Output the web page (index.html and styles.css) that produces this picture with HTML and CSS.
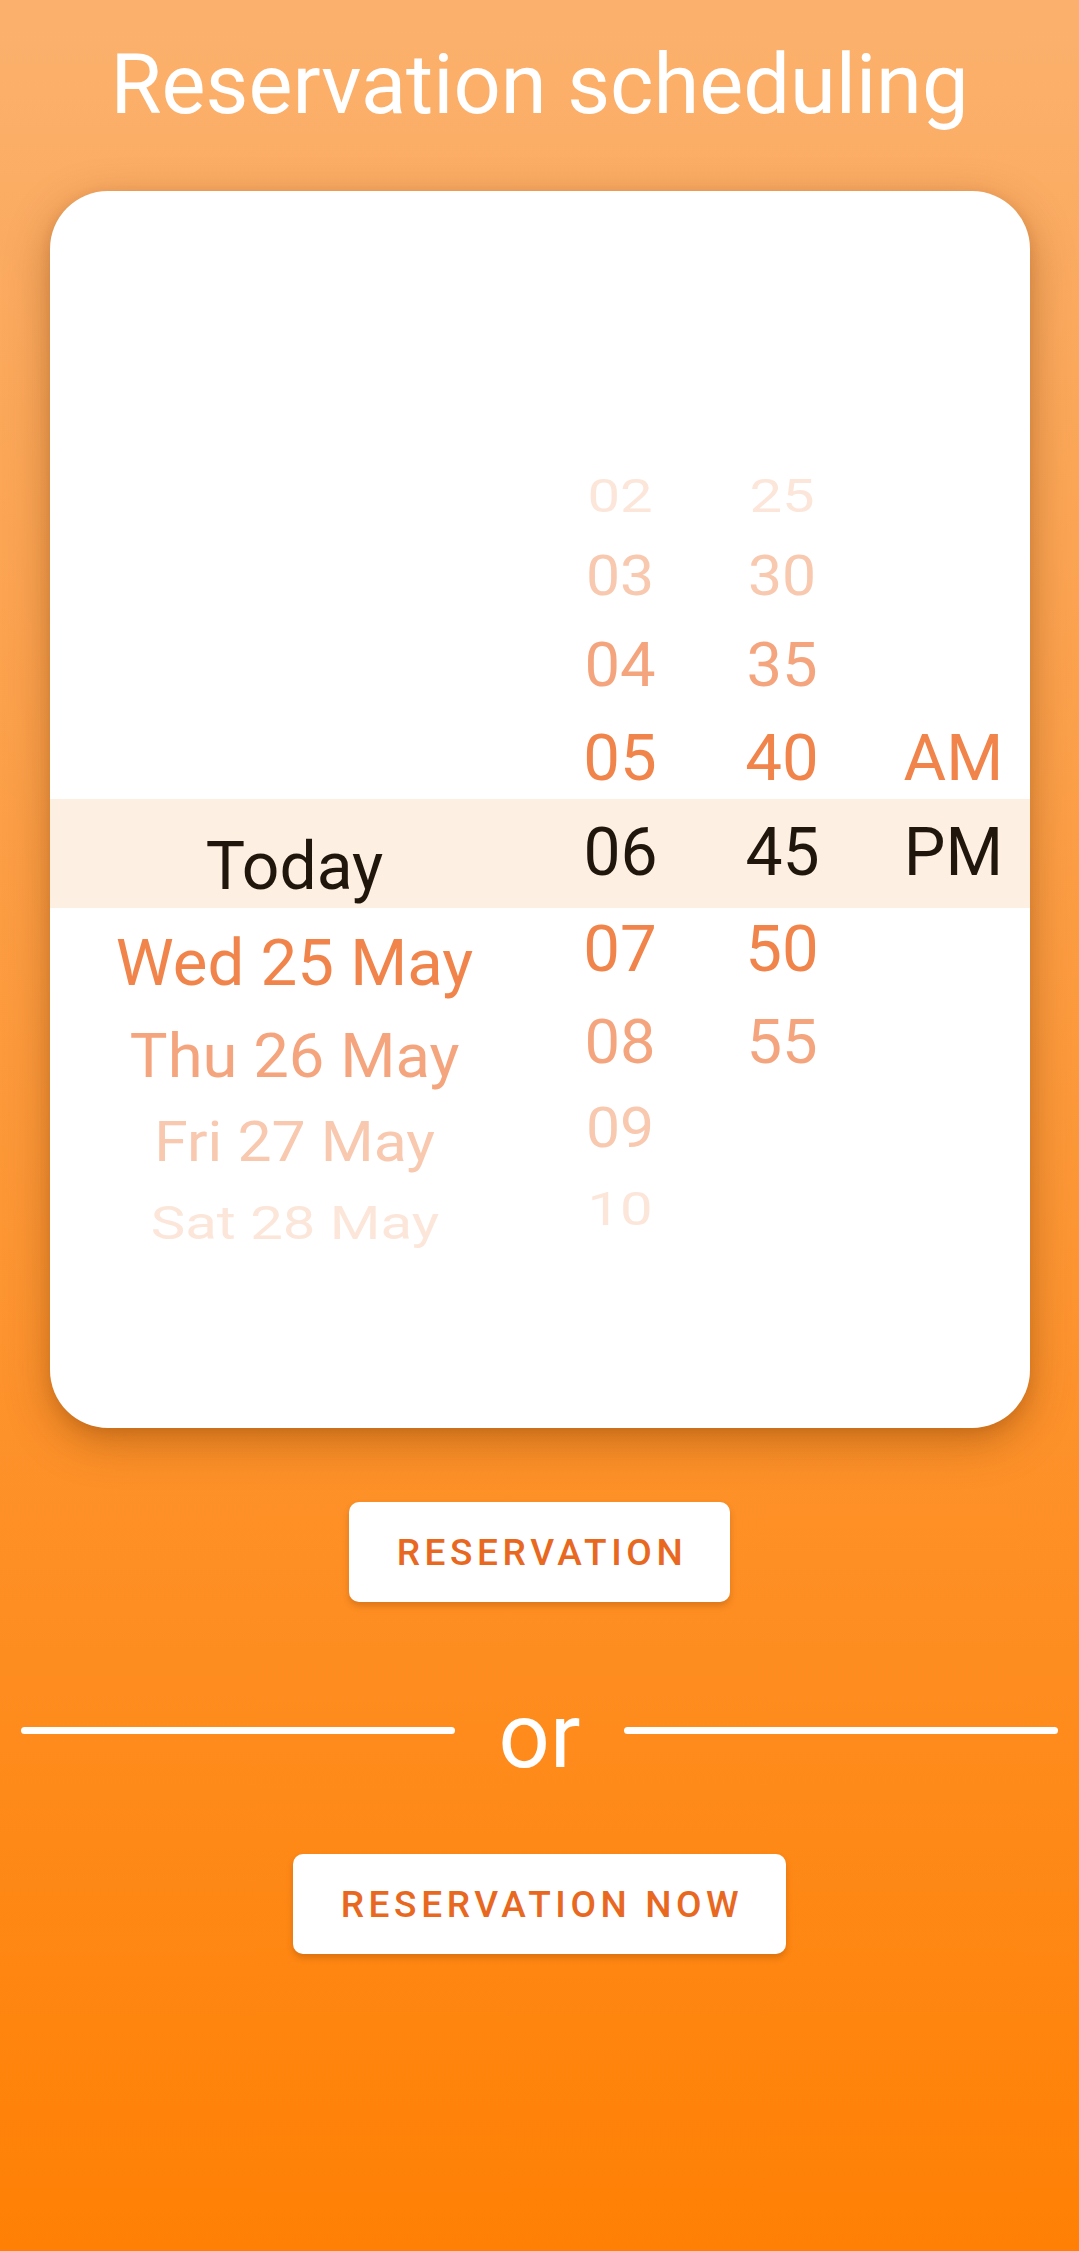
FILE: index.html
```html
<!DOCTYPE html>
<html lang="en">
<head>
<meta charset="utf-8">
<title>Reservation scheduling</title>
<link rel="stylesheet" href="styles.css">
</head>
<body>
<main class="screen">
  <h1 class="title">Reservation scheduling</h1>

  <section class="card">
    <div class="band"></div>
    <div class="picker">
      <div class="wheel wheel-date">
        <div class="row d4"></div>
        <div class="row d3"></div>
        <div class="row d2"></div>
        <div class="row d1"></div>
        <div class="row d0"><span>Today</span></div>
        <div class="row d1"><span>Wed 25 May</span></div>
        <div class="row d2"><span>Thu 26 May</span></div>
        <div class="row d3"><span>Fri 27 May</span></div>
        <div class="row d4"><span>Sat 28 May</span></div>
      </div>
      <div class="wheel wheel-hour">
        <div class="row d4"><span>02</span></div>
        <div class="row d3"><span>03</span></div>
        <div class="row d2"><span>04</span></div>
        <div class="row d1"><span>05</span></div>
        <div class="row d0"><span>06</span></div>
        <div class="row d1"><span>07</span></div>
        <div class="row d2"><span>08</span></div>
        <div class="row d3"><span>09</span></div>
        <div class="row d4"><span>10</span></div>
      </div>
      <div class="wheel wheel-min">
        <div class="row d4"><span>25</span></div>
        <div class="row d3"><span>30</span></div>
        <div class="row d2"><span>35</span></div>
        <div class="row d1"><span>40</span></div>
        <div class="row d0"><span>45</span></div>
        <div class="row d1"><span>50</span></div>
        <div class="row d2"><span>55</span></div>
        <div class="row d3"></div>
        <div class="row d4"></div>
      </div>
      <div class="wheel wheel-ampm">
        <div class="row d4"></div>
        <div class="row d3"></div>
        <div class="row d2"></div>
        <div class="row d1"><span>AM</span></div>
        <div class="row d0"><span>PM</span></div>
        <div class="row d1"></div>
        <div class="row d2"></div>
        <div class="row d3"></div>
        <div class="row d4"></div>
      </div>
    </div>
  </section>

  <button class="btn btn-first" type="button">RESERVATION</button>

  <div class="or-row">
    <span class="line"></span>
    <span class="or">or</span>
    <span class="line"></span>
  </div>

  <button class="btn" type="button">RESERVATION NOW</button>
</main>
</body>
</html>
```

FILE: styles.css
```css
* {
  box-sizing: border-box;
}

html,
body {
  margin: 0;
  padding: 0;
}

body {
  font-family: Roboto, "Noto Sans", "Liberation Sans", sans-serif;
}

.screen {
  min-height: 2251px;
  display: flex;
  flex-direction: column;
  align-items: center;
  background: linear-gradient(180deg, #fbb16d 0%, #ff8004 100%);
}

.title {
  margin: 36px 0 0;
  font-size: 83px;
  font-weight: 400;
  line-height: normal;
  color: #ffffff;
  text-align: center;
}

.card {
  position: relative;
  width: 980px;
  margin-top: 58px;
  padding: 267px 0 166px;
  background: #ffffff;
  border-radius: 58px;
  box-shadow: 0 14px 44px rgba(110, 50, 0, 0.38), 0 4px 12px rgba(110, 50, 0, 0.12);
}

.band {
  position: absolute;
  left: 0;
  right: 0;
  top: 608px;
  height: 109px;
  background: #fdefe2;
}

.picker {
  position: relative;
  z-index: 1;
  display: grid;
  grid-template-columns: 490px 162px 162px 1fr;
  align-items: start;
}

.wheel {
  display: flex;
  flex-direction: column;
}

.wheel-date {
  margin-top: 14px;
}

.wheel-ampm {
  padding-left: 14px;
}

.row {
  display: flex;
  align-items: center;
  justify-content: center;
  font-size: 66px;
  line-height: 1;
  white-space: nowrap;
}

.row span {
  display: block;
}

.d0 {
  height: 96px;
  color: #21160c;
}

.d1 {
  height: 95px;
  color: #f0844a;
}

.d1 span {
  transform: scale(0.99, 0.985);
}

.d2 {
  height: 91px;
  color: #f4a57e;
}

.d2 span {
  transform: scale(0.96, 0.935);
}

.d3 {
  height: 84px;
  color: #f8c8af;
}

.d3 span {
  transform: scale(0.92, 0.83);
}

.d4 {
  height: 77px;
  color: #fce6da;
}

.d4 span {
  transform: scale(0.88, 0.69);
}

.btn {
  height: 100px;
  padding: 0 43px 0 48px;
  border: 0;
  border-radius: 10px;
  background: #ffffff;
  color: #e9681f;
  font-family: Roboto, "Noto Sans", "Liberation Sans", sans-serif;
  font-size: 37px;
  font-weight: 500;
  letter-spacing: 4.6px;
  box-shadow: 0 4px 6px rgba(120, 50, 0, 0.25);
}

.btn-first {
  margin-top: 74px;
}

.or-row {
  align-self: stretch;
  display: flex;
  align-items: center;
  gap: 44px;
  padding: 0 21px;
  margin-top: 90px;
  margin-bottom: 72px;
}

.line {
  flex: 1;
  height: 7px;
  margin-bottom: 14px;
  border-radius: 4px;
  background: #ffffff;
}

.or {
  font-size: 90px;
  line-height: 1;
  color: #ffffff;
}
```
